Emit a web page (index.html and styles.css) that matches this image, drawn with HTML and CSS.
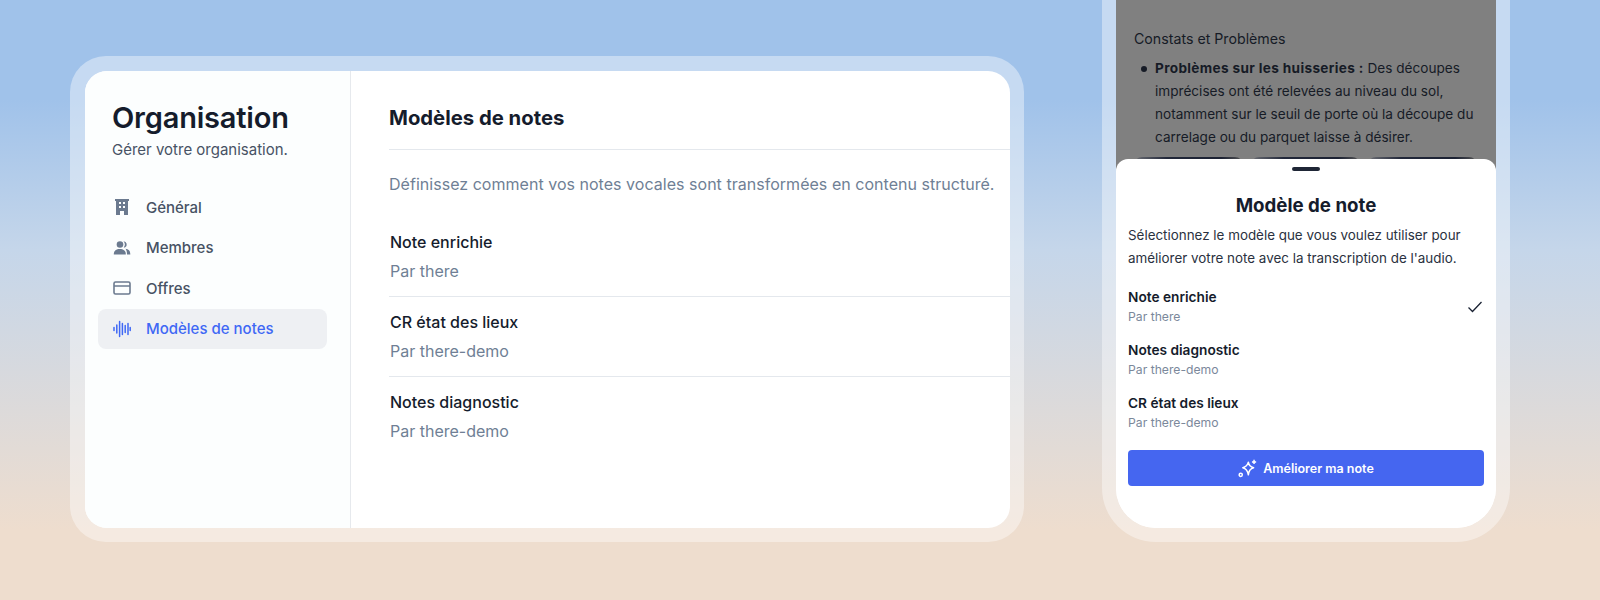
FILE: index.html
```html
<!DOCTYPE html>
<html lang="fr">
<head>
    <meta charset="UTF-8">
    <title>Modèles de notes</title>
    <link rel="stylesheet" href="styles.css">
</head>
<body>
<div class="desk-frame">
    <div class="window">
        <div class="side">
            <h1 class="side-title">Organisation</h1>
            <p class="side-sub">Gérer votre organisation.</p>
            <ul class="nav">
                <li class="nav-item">
                    <svg class="nav-icon" viewBox="0 0 18 18"><path fill="#6b7a8f" fill-rule="evenodd" d="M2 1h14v2h-1v14h-4v-4H7v4H3V3H2zM6 4v2h2V4zm4 0v2h2V4zM6 8v2h2V8zm4 0v2h2V8z"/></svg>
                    <span>Général</span>
                </li>
                <li class="nav-item">
                    <svg class="nav-icon" viewBox="0 0 18 18"><g fill="#6b7a8f"><circle cx="7" cy="5.500" r="3.300"/><path d="M.8 15c0-3.400 2.600-5 6-5s6 1.600 6 5v.6H.8z"/><path d="M10.500 2.200a3.300 3.300 0 0 1 1.500 6.200 3.300 3.300 0 0 1-1.300.1 5 5 0 0 0-.2-6.300zM12.500 9.800c3 .3 4.800 2 4.800 5.200v.6h-3.300c0-2.300-.3-4.200-1.500-5.800z"/></g></svg>
                    <span>Membres</span>
                </li>
                <li class="nav-item">
                    <svg class="nav-icon" viewBox="0 0 18 18"><g fill="none" stroke="#6b7a8f" stroke-width="1.600"><rect x="1" y="3" width="16" height="12" rx="1.500"/><path d="M1 7h16"/></g></svg>
                    <span>Offres</span>
                </li>
                <li class="nav-item active">
                    <svg class="nav-icon" viewBox="0 0 18 18"><path fill="none" stroke="#3f68f5" stroke-width="1.500" stroke-linecap="round" d="M1 7.500v3M3.800 5v8M6.600 1.500v15M9.400 3.500v11M12.200 5.500v7M15 3.500v11M17.200 7.500v3"/></svg>
                    <span>Modèles de notes</span>
                </li>
            </ul>
        </div>
        <div class="main">
            <h2 class="main-title">Modèles de notes</h2>
            <p class="main-desc">Définissez comment vos notes vocales sont transformées en contenu structuré.</p>
            <ul class="tpl-list">
                <li class="tpl">
                    <div class="tpl-name">Note enrichie</div>
                    <div class="tpl-by">Par there</div>
                </li>
                <li class="tpl">
                    <div class="tpl-name">CR état des lieux</div>
                    <div class="tpl-by">Par there-demo</div>
                </li>
                <li class="tpl">
                    <div class="tpl-name">Notes diagnostic</div>
                    <div class="tpl-by">Par there-demo</div>
                </li>
            </ul>
        </div>
    </div>
</div>

<div class="phone-frame">
    <div class="phone">
        <div class="note">
            <div class="note-head">Constats et Problèmes</div>
            <ul class="note-list">
                <li><b>Problèmes sur les huisseries :</b> Des découpes imprécises ont été relevées au niveau du sol, notamment sur le seuil de porte où la découpe du carrelage ou du parquet laisse à désirer.</li>
            </ul>
            <div class="thumbs">
                <div class="thumb"></div>
                <div class="thumb"></div>
                <div class="thumb"></div>
            </div>
        </div>
        <div class="sheet">
            <div class="handle"></div>
            <h3 class="sheet-title">Modèle de note</h3>
            <p class="sheet-desc">Sélectionnez le modèle que vous voulez utiliser pour améliorer votre note avec la transcription de l'audio.</p>
            <ul class="opts">
                <li class="opt">
                    <div>
                        <div class="opt-name">Note enrichie</div>
                        <div class="opt-by">Par there</div>
                    </div>
                    <svg class="check" viewBox="0 0 16 16"><path fill="none" stroke="#1a2233" stroke-width="1.300" d="M1.500 8.500l4 4 9-9.500"/></svg>
                </li>
                <li class="opt">
                    <div>
                        <div class="opt-name">Notes diagnostic</div>
                        <div class="opt-by">Par there-demo</div>
                    </div>
                </li>
                <li class="opt">
                    <div>
                        <div class="opt-name">CR état des lieux</div>
                        <div class="opt-by">Par there-demo</div>
                    </div>
                </li>
            </ul>
            <a class="btn">
                <svg class="btn-icon" viewBox="0 0 18 18"><g fill="none" stroke="#fff" stroke-width="1.400" stroke-linejoin="round"><path d="M9.800 3c.5 3 1.700 4.500 5 5.200-3.300.7-4.500 2.300-5 6.800-.7-4.500-2-6.100-5.300-6.800 3.300-.7 4.600-2.200 5.300-5.200z"/><circle cx="2.600" cy="15" r="1.500"/><path d="M15.200.8v4M13.200 2.800h4"/></g></svg>
                Améliorer ma note
            </a>
        </div>
    </div>
</div>
</body>
</html>
```

FILE: styles.css
```css
* {
    margin: 0;
    padding: 0;
    box-sizing: border-box;
}

ul {
    list-style: none;
}

html,
body {
    height: 600px;
    overflow: hidden;
}

body {
    display: flex;
    align-items: flex-start;
    padding-left: 70px;
    gap: 78px;
    font-family: Inter, "Liberation Sans", sans-serif;
    color: #151c2c;
    background: linear-gradient(180deg, #a0c2ea 0, #a0c2ea 100px, #c5d6ea 250px, #eeddce 530px, #eeddce 600px);
}

/* cadre de gauche */
.desk-frame {
    width: 954px;
    height: 486px;
    margin-top: 56px;
    padding: 15px 14px 14px 15px;
    border-radius: 36px;
    background: rgba(255, 255, 255, .4);
}

.window {
    display: flex;
    height: 100%;
    border-radius: 22px;
    overflow: hidden;
    background: #fff;
}

.side {
    width: 266px;
    flex-shrink: 0;
    padding: 30px 13px 0;
    background: #fcfefe;
    border-right: 1px solid #e6e9ed;
}

.side-title {
    padding-left: 14px;
    font-size: 29px;
    line-height: 34px;
    font-weight: 600;
    letter-spacing: -.2px;
}

.side-sub {
    margin-top: 5px;
    padding-left: 14px;
    font-size: 15px;
    line-height: 20px;
    color: #475264;
}

.nav {
    margin-top: 27px;
}

.nav-item {
    display: flex;
    align-items: center;
    gap: 15px;
    height: 40px;
    margin-bottom: .5px;
    padding-left: 15px;
    border-radius: 8px;
    font-size: 15px;
    font-weight: 500;
    color: #475264;
}

.nav-item.active {
    width: 229px;
    background: #eef0f3;
    color: #3f68f5;
}

.nav-icon {
    width: 18px;
    height: 18px;
}

.main {
    flex: 1;
    padding: 34px 0 0 38px;
}

.main-title {
    padding-bottom: 18px;
    font-size: 20.300px;
    line-height: 26px;
    font-weight: 700;
    border-bottom: 1px solid #e4e8ed;
}

.main-desc {
    margin-top: 23px;
    font-size: 16px;
    line-height: 22px;
    letter-spacing: .03px;
    color: #6f7f95;
    white-space: nowrap;
}

.tpl-list {
    margin-top: 22px;
}

.tpl {
    height: 80px;
    padding: 14px 0 0 1px;
    border-bottom: 1px solid #e4e8ed;
}

.tpl:last-child {
    border-bottom: 0;
}

.tpl-name {
    font-size: 16px;
    line-height: 22px;
    font-weight: 500;
}

.tpl-by {
    margin-top: 7px;
    font-size: 16px;
    line-height: 22px;
    color: #6f7f95;
}

/* telephone */
.phone-frame {
    width: 408px;
    height: 542px;
    padding: 0 14px 14px;
    border-radius: 0 0 54px 54px;
    background: rgba(255, 255, 255, .4);
}

.phone {
    display: flex;
    flex-direction: column;
    height: 100%;
    border-radius: 0 0 40px 40px;
    overflow: hidden;
    background: #fff;
}

.note {
    height: 172px;
    margin-bottom: -13px;
    padding: 29px 18px 0;
    overflow: hidden;
    font-size: 13.600px;
    line-height: 23px;
    color: #161b26;
    background: #808080;
}

.note-head {
    font-size: 14.200px;
    line-height: 20px;
}

.note-list {
    margin-top: 8px;
    padding-left: 21px;
    list-style: none;
}

.note-list li {
    position: relative;
}

.note-list li b {
    letter-spacing: .35px;
}

.note-list li::before {
    content: "";
    position: absolute;
    left: -14px;
    top: 9px;
    width: 6px;
    height: 6px;
    border-radius: 50%;
    background: #161b26;
}

.thumbs {
    display: flex;
    gap: 8px;
    margin-top: 8px;
}

.thumb {
    width: 109px;
    height: 40px;
    border-radius: 8px;
    background: linear-gradient(90deg, #6c6e74 0, #22283a 30%, #1c2233 80%, #555 100%);
}

.sheet {
    flex: 1;
    position: relative;
    padding: 8px 12px 0;
    border-radius: 12px 12px 0 0;
    background: #fff;
}

.handle {
    width: 28px;
    height: 4px;
    margin: 0 auto;
    border-radius: 2px;
    background: #1f2636;
}

.sheet-title {
    margin-top: 22px;
    text-align: center;
    font-size: 18.700px;
    line-height: 26px;
    font-weight: 700;
}

.sheet-desc {
    margin-top: 5px;
    padding-right: 8px;
    font-size: 13.400px;
    line-height: 23px;
    color: #2a3140;
}

.opts {
    margin-top: 10px;
}

.opt {
    display: flex;
    justify-content: space-between;
    align-items: center;
    height: 53px;
}

.opt-name {
    font-size: 13.700px;
    line-height: 20px;
    font-weight: 600;
}

.opt-by {
    margin-top: 1px;
    font-size: 12.200px;
    line-height: 18px;
    color: #7b889b;
}

.check {
    width: 16px;
    height: 16px;
    margin-right: 1px;
}

.btn {
    display: flex;
    justify-content: center;
    align-items: center;
    gap: 6px;
    height: 36px;
    margin-top: 11px;
    border-radius: 4px;
    background: #4566f0;
    color: #fff;
    font-size: 12.500px;
    font-weight: 600;
}

.btn-icon {
    width: 19px;
    height: 19px;
}
```
